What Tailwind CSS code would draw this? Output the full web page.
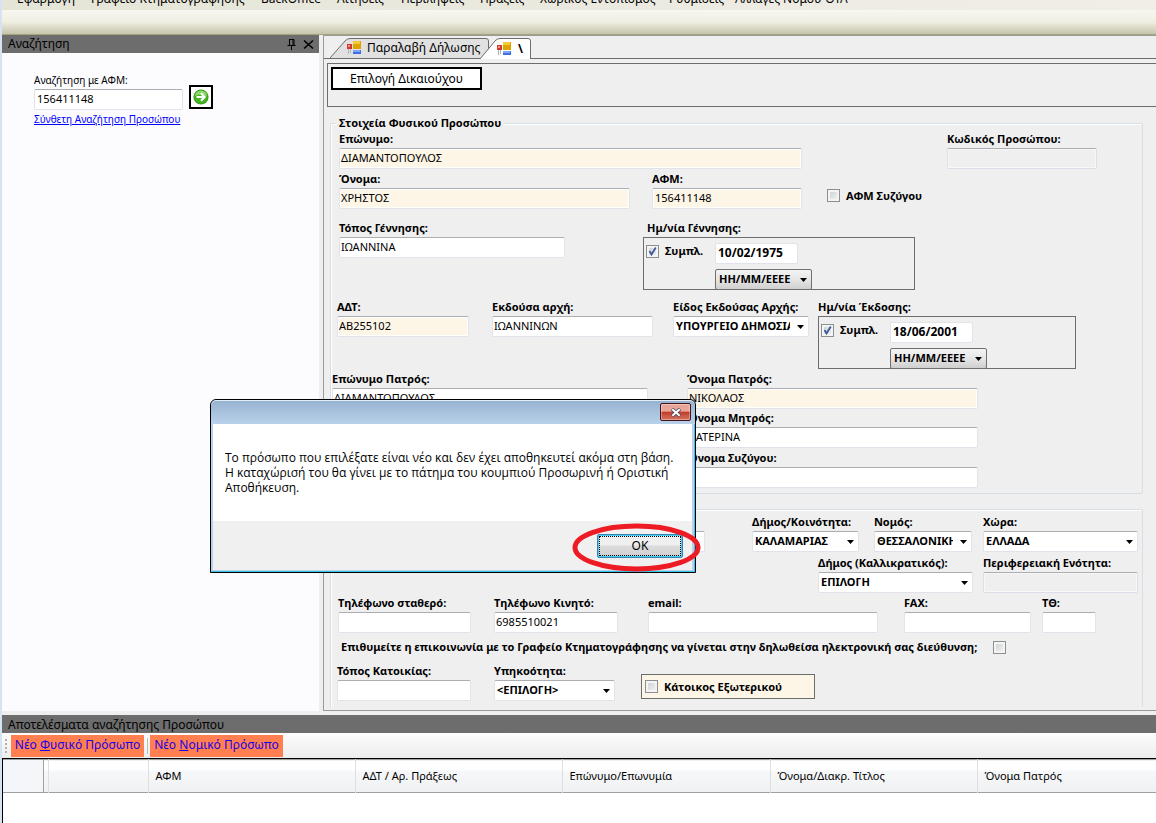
<!DOCTYPE html>
<html lang="el">
<head>
<meta charset="utf-8">
<title>Κτηματογράφηση</title>
<script src="https://cdn.jsdelivr.net/npm/@tailwindcss/browser@4"></script>
</head>
<body class="flex min-h-screen flex-col overflow-hidden border-l-2 border-[#d6e3f2] bg-[#efefef] font-['Noto_Sans','Liberation_Sans',sans-serif] text-[11px] text-black">

<!-- Menu -->
<nav class="flex h-[10px] items-end overflow-hidden bg-linear-to-r from-[#e5e5d7] to-[#f1eee8] pb-[3px] pl-[15px] text-left text-xs leading-4 whitespace-nowrap">
  <button class="w-[74px] text-left">Εφαρμογή</button>
  <button class="w-[170px] text-left">Γραφείο Κτηματογράφησης</button>
  <button class="w-[76px] text-left">BackOffice</button>
  <button class="w-16 text-left">Αιτήσεις</button>
  <button class="w-[79px] text-left">Περιλήψεις</button>
  <button class="w-[60px] text-left">Πράξεις</button>
  <button class="w-[129px] text-left">Χωρικός Εντοπισμός</button>
  <button class="w-[66px] text-left">Ρυθμίσεις</button>
  <button class="text-left">Αλλαγές Νόμου-ΟΤΑ</button>
</nav>
<div class="h-[25px] border-b border-[#a2a67c] bg-linear-to-b from-[#f8f7f0] via-[#efeee2] to-[#c6c5ab]"></div>

<main class="flex">
  <!-- Search panel -->
  <aside class="w-[317px] shrink-0 bg-[#fcfcff]">
    <header class="flex h-[18px] items-center bg-[#6d6d6d] pr-[5px] pl-1.5">
      <h2 class="grow text-xs leading-[18px]">Αναζήτηση</h2>
      <button aria-label="Καρφίτσωμα" class="mr-1.5"><svg class="size-[11px]" viewBox="0 0 11 11" fill="none" stroke="#000"><path d="M3.5 0.5V6.5M3 .5H8M7 1V6.5M8 .5V6.5M1.5 6.5H9.5M5.5 7V11"/></svg></button>
      <button aria-label="Κλείσιμο"><svg class="size-[11px]" viewBox="0 0 11 11" stroke="#000" stroke-width="1.6"><path d="M1 1.5L10 9.5M10 1.5L1 9.5"/></svg></button>
    </header>
    <div class="pt-[19px] pl-8">
      <label for="afmSearch" class="block text-[10px] leading-4">Αναζήτηση με ΑΦΜ:</label>
      <div class="flex h-[22px] items-start gap-1.5">
        <input id="afmSearch" value="156411148" class="mt-px h-[21px] w-[149px] rounded-xs border border-[#e2e3ea] border-t-[#abadb3] bg-white pb-0.5 pl-0.5">
        <button aria-label="Αναζήτηση" class="-mt-[3px] grid size-6 shrink-0 place-items-center border-2 border-black bg-white"><svg class="size-4" viewBox="0 0 16 16"><circle cx="8" cy="8" r="7.6" fill="#3a9a20"/><circle cx="8" cy="8" r="6.6" fill="#43b51f"/><path d="M2 7a6 5.5 0 0 1 12 0Q8 4 2 7" fill="#8bd86c"/><path d="M3.5 8H11M8 4.3L11.6 8 8 11.7" fill="none" stroke="#fff" stroke-width="2.2"/></svg></button>
      </div>
      <a href="#" class="block text-[10px] leading-[18px] text-[#0000ff] underline">Σύνθετη Αναζήτηση Προσώπου</a>
    </div>
  </aside>

  <!-- Document area -->
  <section class="ml-1 min-w-0 grow border-t border-b border-l border-[#9a9a9a]">
    <div class="flex h-[23px] items-end border-b border-[#6d6d6d]">
      <button class="relative z-0 ml-1.5 flex h-5 w-[160px] items-center text-xs whitespace-nowrap">
        <svg class="absolute inset-0 size-full" viewBox="0 0 160 20"><path d="M0 20L15 3Q17 .5 20 .5H156Q158.500 .5 158.500 3V20" fill="#e1e1e1" stroke="#6d6d6d"/></svg>
        <svg class="relative ml-[17px] size-[14px] shrink-0" viewBox="0 0 14 14"><path d="M1.500 8V13M3.500 8V12" stroke="#b5b5b5"/><path d="M6 0h8v8H6z" fill="#e0a400"/><path d="M6 0h7v3H6z" fill="#f7c935"/><path d="M6 9h8v4H6z" fill="#3f6fe0"/><path d="M6 9h7v2H6z" fill="#7fa6f7"/><path d="M0 3h5v5H0z" fill="#d03a2e"/><path d="M1 4h2v2H1z" fill="#f0958c"/></svg>
        <span class="relative ml-1.5">Παραλαβή Δήλωσης</span>
      </button>
      <button class="relative z-10 -mb-px -ml-[10px] flex h-[21px] w-[51px] items-center text-xs font-bold">
        <svg class="absolute inset-0 size-full" viewBox="0 0 51 21"><path d="M0 21L15 3Q17 .5 20 .5H48Q50.500 .5 50.500 3V21" fill="#fff" stroke="#6d6d6d"/><path d="M1 20.500H50" stroke="#fff"/></svg>
        <svg class="relative ml-[17px] size-[14px] shrink-0" viewBox="0 0 14 14"><path d="M1.500 8V13M3.500 8V12" stroke="#b5b5b5"/><path d="M6 0h8v8H6z" fill="#e0a400"/><path d="M6 0h7v3H6z" fill="#f7c935"/><path d="M6 9h8v4H6z" fill="#3f6fe0"/><path d="M6 9h7v2H6z" fill="#7fa6f7"/><path d="M0 3h5v5H0z" fill="#d03a2e"/><path d="M1 4h2v2H1z" fill="#f0958c"/></svg>
        <span class="relative ml-[7px]">\</span>
      </button>
    </div>

    <div class="mt-1 ml-[3px] h-11 border border-r-0 border-[#6d6d6d] p-[3px]">
      <button class="h-[23px] w-[151px] border-2 border-black bg-white text-xs leading-4">Επιλογή Δικαιούχου</button>
    </div>

    <form class="mt-2 mr-[13px] ml-1.5 pb-[3px] leading-4 whitespace-nowrap [&_input]:pb-0.5 [&_select]:pb-px">
      <fieldset class="rounded-xs border border-[#d5dfe5] pb-[5px] shadow-[inset_1px_1px_0_#fff]">
        <legend class="ml-[5px] bg-[#efefef] px-[3px] font-bold">Στοιχεία Φυσικού Προσώπου</legend>

        <div class="flex pl-2">
          <div class="w-[463px]"><label for="f1" class="block h-[17px] font-bold">Επώνυμο:</label><input id="f1" value="ΔΙΑΜΑΝΤΟΠΟΥΛΟΣ" class="h-[21px] w-full rounded-xs border border-[#e2e3ea] border-t-[#abadb3] bg-[#fdf5e6] pl-px shadow-[inset_0_0_0_1px_#fff]"></div>
          <div class="ml-[145px] w-[150px]"><label for="f2" class="block h-[17px] font-bold">Κωδικός Προσώπου:</label><input id="f2" disabled class="h-[21px] w-full rounded-xs border border-[#dcdfe8] border-t-[#abadb3] bg-[#efefef] pl-px shadow-[inset_0_0_0_1px_#f8f8f8]"></div>
        </div>

        <div class="mt-0.5 flex pl-2">
          <div class="w-[291px]"><label for="f3" class="block h-[17px] font-bold">Όνομα:</label><input id="f3" value="ΧΡΗΣΤΟΣ" class="h-[21px] w-full rounded-xs border border-[#e2e3ea] border-t-[#abadb3] bg-[#fdf5e6] pl-px shadow-[inset_0_0_0_1px_#fff]"></div>
          <div class="ml-[22px] w-[150px]"><label for="f4" class="block h-[17px] font-bold">ΑΦΜ:</label><input id="f4" value="156411148" class="h-[21px] w-full rounded-xs border border-[#e2e3ea] border-t-[#abadb3] bg-[#fdf5e6] pl-0.5 shadow-[inset_0_0_0_1px_#fff]"></div>
          <label class="mt-4 ml-[25px] flex h-[17px] items-center gap-1.5 font-bold"><input type="checkbox" class="size-[13px] appearance-none border border-[#8e8f8f] bg-linear-to-br from-[#c9cdd3] to-[#f6f6f6] shadow-[inset_0_0_0_2px_#f4f4f4]">ΑΦΜ Συζύγου</label>
        </div>

        <div class="mt-[11px] flex pl-2">
          <div class="w-[226px]"><label for="f5" class="block h-[17px] font-bold">Τόπος Γέννησης:</label><input id="f5" value="ΙΩΑΝΝΙΝΑ" class="h-[21px] w-full rounded-xs border border-[#e2e3ea] border-t-[#abadb3] bg-white pl-px"></div>
          <div class="ml-[78px] w-[272px] font-bold">
            <label for="f6" class="block h-[17px] pl-1">Ημ/νία Γέννησης:</label>
            <div class="flex h-[53px] items-start border border-[#6d6d6d] pl-0.5">
              <label class="mt-[5px] flex w-[69px] items-center gap-1.5"><span class="relative flex"><input type="checkbox" checked class="size-[13px] appearance-none border border-[#8e8f8f] bg-linear-to-br from-[#c9cdd3] to-[#f6f6f6] shadow-[inset_0_0_0_2px_#f4f4f4]"><svg class="pointer-events-none absolute inset-0 size-full" viewBox="0 0 13 13"><path d="M3.500 6L5.500 9.500 9.800 2.500" fill="none" stroke="#3f5896" stroke-width="1.800"/></svg></span>Συμπλ.</label>
              <div class="flex flex-col items-start gap-[5px] pt-[5px]">
                <input id="f6" value="10/02/1975" class="h-[21px] w-[83px] rounded-xs border border-[#e2e3ea] bg-white pl-0.5 text-xs font-bold">
                <div class="relative"><select aria-label="Μορφή ημερομηνίας γέννησης" class="h-[21px] w-[97px] appearance-none rounded-xs border border-[#707070] bg-linear-to-b from-[#f3f3f3] via-[#e6e6e6] to-[#cfcfcf] pl-[3px] font-bold"><option>ΗΗ/ΜΜ/ΕΕΕΕ</option></select><svg class="pointer-events-none absolute top-[9px] right-[5px] h-1 w-[7px]" viewBox="0 0 7 4"><path d="M0 0H7L3.500 4z"/></svg></div>
              </div>
            </div>
          </div>
        </div>

        <div class="mt-[9px] flex pl-1.5">
          <div class="w-[132px]"><label for="f7" class="block h-[17px] font-bold">ΑΔΤ:</label><input id="f7" value="ΑΒ255102" class="h-[21px] w-full rounded-xs border border-[#e2e3ea] border-t-[#abadb3] bg-[#fdf5e6] pl-px shadow-[inset_0_0_0_1px_#fff]"></div>
          <div class="ml-[23px] w-[161px]"><label for="f8" class="block h-[17px] font-bold">Εκδούσα αρχή:</label><input id="f8" value="ΙΩΑΝΝΙΝΩΝ" class="h-[21px] w-full rounded-xs border border-[#e2e3ea] border-t-[#abadb3] bg-white pl-px"></div>
          <div class="ml-5 w-[136px] font-bold"><label for="f9" class="block h-[17px]">Είδος Εκδούσας Αρχής:</label><div class="relative"><select id="f9" class="h-[21px] w-full appearance-none rounded-xs border border-[#e2e3ea] border-t-[#abadb3] bg-white pr-[18px] pl-0.5 font-bold"><option>ΥΠΟΥΡΓΕΙΟ ΔΗΜΟΣΙΑΣ ΤΑΞΗΣ</option></select><svg class="pointer-events-none absolute top-[9px] right-[5px] h-1 w-[7px]" viewBox="0 0 7 4"><path d="M0 0H7L3.500 4z"/></svg></div></div>
          <div class="ml-[9px] w-[258px] font-bold">
            <label for="f10" class="block h-[17px]">Ημ/νία Έκδοσης:</label>
            <div class="flex h-[53px] items-start border border-[#6d6d6d] pl-0.5">
              <label class="mt-[5px] flex w-[69px] items-center gap-1.5"><span class="relative flex"><input type="checkbox" checked class="size-[13px] appearance-none border border-[#8e8f8f] bg-linear-to-br from-[#c9cdd3] to-[#f6f6f6] shadow-[inset_0_0_0_2px_#f4f4f4]"><svg class="pointer-events-none absolute inset-0 size-full" viewBox="0 0 13 13"><path d="M3.500 6L5.500 9.500 9.800 2.500" fill="none" stroke="#3f5896" stroke-width="1.800"/></svg></span>Συμπλ.</label>
              <div class="flex flex-col items-start gap-[5px] pt-[5px]">
                <input id="f10" value="18/06/2001" class="h-[21px] w-[83px] rounded-xs border border-[#e2e3ea] bg-white pl-0.5 text-xs font-bold">
                <div class="relative"><select aria-label="Μορφή ημερομηνίας έκδοσης" class="h-[21px] w-[97px] appearance-none rounded-xs border border-[#707070] bg-linear-to-b from-[#f3f3f3] via-[#e6e6e6] to-[#cfcfcf] pl-[3px] font-bold"><option>ΗΗ/ΜΜ/ΕΕΕΕ</option></select><svg class="pointer-events-none absolute top-[9px] right-[5px] h-1 w-[7px]" viewBox="0 0 7 4"><path d="M0 0H7L3.500 4z"/></svg></div>
              </div>
            </div>
          </div>
        </div>

        <div class="mt-0.5 flex pl-px">
          <div class="w-[316px]"><label for="f11" class="block h-[17px] font-bold">Επώνυμο Πατρός:</label><input id="f11" value="ΔΙΑΜΑΝΤΟΠΟΥΛΟΣ" class="h-[21px] w-full rounded-xs border border-[#e2e3ea] border-t-[#abadb3] bg-white pl-px"></div>
          <div class="ml-[39px] w-[291px]"><label for="f12" class="block h-[17px] font-bold">Όνομα Πατρός:</label><input id="f12" value="ΝΙΚΟΛΑΟΣ" class="h-[21px] w-full rounded-xs border border-[#e2e3ea] border-t-[#abadb3] bg-[#fdf5e6] pl-px shadow-[inset_0_0_0_1px_#fff]"></div>
        </div>
        <div class="mt-px flex pl-[356px]">
          <div class="w-[291px]"><label for="f13" class="block h-[17px] font-bold">Όνομα Μητρός:</label><input id="f13" value="ΚΑΤΕΡΙΝΑ" class="h-[21px] w-full rounded-xs border border-[#e2e3ea] border-t-[#abadb3] bg-white pl-px"></div>
        </div>
        <div class="mt-0.5 flex pl-[356px]">
          <div class="w-[291px]"><label for="f14" class="block h-[17px] font-bold">Όνομα Συζύγου:</label><input id="f14" class="h-[21px] w-full rounded-xs border border-[#e2e3ea] border-t-[#abadb3] bg-white pl-px"></div>
        </div>
      </fieldset>

      <fieldset aria-label="Στοιχεία Διεύθυνσης" class="mt-[15px] rounded-t-xs border border-b-0 border-[#d5dfe5] pt-1 pb-1.5 shadow-[inset_1px_1px_0_#fff]">
        <div class="flex items-end pl-1.5">
          <input aria-label="Διεύθυνση" class="h-[21px] w-[368px] rounded-xs border border-[#e2e3ea] border-t-[#abadb3] bg-white pl-px">
          <div class="ml-[47px] w-[107px] font-bold"><label for="g1" class="block h-[17px]">Δήμος/Κοινότητα:</label><div class="relative"><select id="g1" class="h-[21px] w-full appearance-none rounded-xs border border-[#e2e3ea] border-t-[#abadb3] bg-white pr-[18px] pl-0.5 font-bold"><option>ΚΑΛΑΜΑΡΙΑΣ</option></select><svg class="pointer-events-none absolute top-[9px] right-[5px] h-1 w-[7px]" viewBox="0 0 7 4"><path d="M0 0H7L3.500 4z"/></svg></div></div>
          <div class="ml-[15px] w-[98px] font-bold"><label for="g2" class="block h-[17px]">Νομός:</label><div class="relative"><select id="g2" class="h-[21px] w-full appearance-none rounded-xs border border-[#e2e3ea] border-t-[#abadb3] bg-white pr-[18px] pl-0.5 font-bold"><option>ΘΕΣΣΑΛΟΝΙΚΗΣ</option></select><svg class="pointer-events-none absolute top-[9px] right-[5px] h-1 w-[7px]" viewBox="0 0 7 4"><path d="M0 0H7L3.500 4z"/></svg></div></div>
          <div class="ml-[11px] w-[155px] font-bold"><label for="g3" class="block h-[17px]">Χώρα:</label><div class="relative"><select id="g3" class="h-[21px] w-full appearance-none rounded-xs border border-[#e2e3ea] border-t-[#abadb3] bg-white pr-[18px] pl-0.5 font-bold"><option>ΕΛΛΑΔΑ</option></select><svg class="pointer-events-none absolute top-[9px] right-[5px] h-1 w-[7px]" viewBox="0 0 7 4"><path d="M0 0H7L3.500 4z"/></svg></div></div>
        </div>

        <div class="mt-[3px] flex pl-[487px]">
          <div class="w-[155px] font-bold"><label for="g4" class="block h-[17px]">Δήμος (Καλλικρατικός):</label><div class="relative"><select id="g4" class="h-[21px] w-full appearance-none rounded-xs border border-[#e2e3ea] border-t-[#abadb3] bg-white pr-[18px] pl-0.5 font-bold"><option>ΕΠΙΛΟΓΗ</option></select><svg class="pointer-events-none absolute top-[9px] right-[5px] h-1 w-[7px]" viewBox="0 0 7 4"><path d="M0 0H7L3.500 4z"/></svg></div></div>
          <div class="ml-2.5 w-[155px]"><label for="g5" class="block h-[17px] font-bold">Περιφερειακή Ενότητα:</label><input id="g5" disabled class="h-[21px] w-full rounded-xs border border-[#dcdfe8] border-t-[#abadb3] bg-[#efefef] pl-px shadow-[inset_0_0_0_1px_#f8f8f8]"></div>
        </div>

        <div class="mt-0.5 flex pl-[7px]">
          <div class="w-[133px]"><label for="g6" class="block h-[17px] font-bold">Τηλέφωνο σταθερό:</label><input id="g6" class="h-[21px] w-full rounded-xs border border-[#e2e3ea] border-t-[#abadb3] bg-white pl-px"></div>
          <div class="ml-[23px] w-[124px]"><label for="g7" class="block h-[17px] font-bold">Τηλέφωνο Κινητό:</label><input id="g7" value="6985510021" class="h-[21px] w-full rounded-xs border border-[#e2e3ea] border-t-[#abadb3] bg-white pl-px"></div>
          <div class="ml-[30px] w-[230px]"><label for="g8" class="block h-[17px] font-bold">email:</label><input id="g8" class="h-[21px] w-full rounded-xs border border-[#e2e3ea] border-t-[#abadb3] bg-white pl-px"></div>
          <div class="ml-[26px] w-[127px]"><label for="g9" class="block h-[17px] font-bold">FAX:</label><input id="g9" class="h-[21px] w-full rounded-xs border border-[#e2e3ea] border-t-[#abadb3] bg-white pl-px"></div>
          <div class="ml-[11px] w-[54px]"><label for="g10" class="block h-[17px] font-bold">ΤΘ:</label><input id="g10" class="h-[21px] w-full rounded-xs border border-[#e2e3ea] border-t-[#abadb3] bg-white pl-px"></div>
        </div>

        <div class="mt-1.5 flex items-center pl-2.5 font-bold">
          <label for="g11" class="w-[652px]">Επιθυμείτε η επικοινωνία με το Γραφείο Κτηματογράφησης να γίνεται στην δηλωθείσα ηλεκτρονική σας διεύθυνση;</label>
          <input id="g11" type="checkbox" class="size-[13px] appearance-none border border-[#8e8f8f] bg-linear-to-br from-[#c9cdd3] to-[#f6f6f6] shadow-[inset_0_0_0_2px_#f4f4f4]">
        </div>

        <div class="mt-2 flex items-end pl-1.5">
          <div class="w-[134px]"><label for="g12" class="block h-[17px] font-bold">Τόπος Κατοικίας:</label><input id="g12" class="h-[21px] w-full rounded-xs border border-[#e2e3ea] border-t-[#abadb3] bg-white pl-px"></div>
          <div class="ml-[23px] w-[121px] font-bold"><label for="g13" class="block h-[17px]">Υπηκοότητα:</label><div class="relative"><select id="g13" class="h-[21px] w-full appearance-none rounded-xs border border-[#e2e3ea] border-t-[#abadb3] bg-white pr-[18px] pl-0.5 font-bold"><option>&lt;ΕΠΙΛΟΓΗ&gt;</option></select><svg class="pointer-events-none absolute top-[9px] right-[5px] h-1 w-[7px]" viewBox="0 0 7 4"><path d="M0 0H7L3.500 4z"/></svg></div></div>
          <label class="mb-0.5 ml-[26px] flex h-[25px] w-[174px] items-center gap-1.5 border border-[#6d6d6d] bg-[#fdf5e6] pl-[3px] font-bold"><input type="checkbox" class="size-[13px] appearance-none border border-[#8e8f8f] bg-linear-to-br from-[#c9cdd3] to-[#f6f6f6] shadow-[inset_0_0_0_2px_#f4f4f4]">Κάτοικος Εξωτερικού</label>
        </div>
      </fieldset>
    </form>
  </section>
</main>

<!-- Search results -->
<section class="mt-1 flex grow flex-col">
  <h2 class="h-[18px] bg-[#6d6d6d] pl-1.5 text-xs leading-5">Αποτελέσματα αναζήτησης Προσώπου</h2>
  <div class="flex h-[25px] items-center bg-linear-to-b from-[#fdfdfd] to-[#ededed] text-xs text-[#1a00e6]">
    <svg class="ml-[3px] h-[14px] w-0.5" viewBox="0 0 2 14" fill="#b0b0b0"><path d="M0 0h2v2H0zM0 4h2v2H0zM0 8h2v2H0zM0 12h2v2H0z"/></svg>
    <button class="ml-1 h-[22px] w-[133px] bg-[#ff7f50] pb-0.5 whitespace-nowrap">Νέο <u>Φ</u>υσικό Πρόσωπο</button>
    <span class="mr-0.5 ml-[3px] h-4 w-px bg-[#bdbdbd]"></span>
    <button class="h-[22px] w-[133px] bg-[#ff7f50] pb-0.5 whitespace-nowrap">Νέο <u>Ν</u>ομικό Πρόσωπο</button>
  </div>
  <div class="grow border-t border-l border-black bg-white">
    <table class="w-full table-fixed border-collapse text-left">
      <colgroup><col class="w-10"><col class="w-[5px]"><col class="w-[100px]"><col class="w-[207px]"><col class="w-[207px]"><col class="w-[208px]"><col class="w-[207px]"><col></colgroup>
      <thead>
        <tr class="h-[33px] border-t border-b border-[#a0a0a0] bg-linear-to-b from-white from-30% via-[#f7f8fa] via-31% to-[#f0f1f3]">
          <th class="border-r border-[#a0a0a0] bg-[#f5f6f9]"></th>
          <th class="border-r border-[#dedfe1]"></th>
          <th class="border-r border-[#dedfe1]"></th>
          <th class="border-r border-[#dedfe1] pl-[7px] font-normal">ΑΦΜ</th>
          <th class="border-r border-[#dedfe1] pl-[7px] font-normal">ΑΔΤ / Αρ. Πράξεως</th>
          <th class="border-r border-[#dedfe1] pl-[7px] font-normal">Επώνυμο/Επωνυμία</th>
          <th class="border-r border-[#dedfe1] pl-[7px] font-normal">Όνομα/Διακρ. Τίτλος</th>
          <th class="pl-[7px] font-normal">Όνομα Πατρός</th>
        </tr>
      </thead>
    </table>
  </div>
</section>

<!-- Message box -->
<div role="dialog" aria-modal="true" aria-label="Μήνυμα" class="absolute top-[399px] left-[210px] flex w-[486px] flex-col rounded-t-md border border-black bg-[#b9d1ea] shadow-[inset_-1px_-1px_0_#35c4ea] text-xs">
  <div class="flex h-6 justify-end rounded-t-md border-t border-white/60 bg-linear-to-b from-[#98b3d1] to-[#b9d1ea] pt-0.5 pr-1">
    <button aria-label="Κλείσιμο" class="grid h-[18px] w-[31px] place-items-center rounded-xs border border-[#43141c] bg-linear-to-b from-[#e8a598] from-45% via-[#c0392b] via-50% to-[#d4735f] shadow-[inset_0_0_0_1px_#ffffff55]"><svg class="h-[9px] w-3" viewBox="0 0 12 9"><path d="M2 1L10 8M10 1L2 8" stroke="#4a4a5c" stroke-width="3.600"/><path d="M2.300 1.300L9.700 7.700M9.700 1.300L2.300 7.700" stroke="#fff" stroke-width="2"/></svg></button>
  </div>
  <div class="mr-[3px] mb-0.5 ml-0.5">
    <p class="h-[97px] bg-white pt-[26px] pl-3 font-['Open_Sans','Noto_Sans',sans-serif] leading-[15px] whitespace-nowrap">Το πρόσωπο που επιλέξατε είναι νέο και δεν έχει αποθηκευτεί ακόμα στη βάση.<br>Η καταχώρισή του θα γίνει με το πάτημα του κουμπιού Προσωρινή ή Οριστική<br>Αποθήκευση.</p>
    <div class="flex h-[49px] justify-end bg-[#f0f0f0] pt-[13px] pr-[9px]">
      <button class="relative h-6 w-[86px] rounded-xs border border-[#3c7fb1] bg-linear-to-b from-[#efefef] from-45% via-[#dcdcdc] via-50% to-[#cfcfcf] p-px shadow-[inset_0_0_0_1px_#46d0f5]"><span class="flex h-full items-center justify-center border border-dotted border-black">OK</span>
        <svg class="pointer-events-none absolute -top-3 -left-[26px] h-[49px] w-[129px]" viewBox="0 0 129 49"><ellipse cx="64.500" cy="24.500" rx="61.500" ry="21.500" fill="none" stroke="#ed1c24" stroke-width="5"/></svg>
      </button>
    </div>
  </div>
</div>
</body>
</html>
